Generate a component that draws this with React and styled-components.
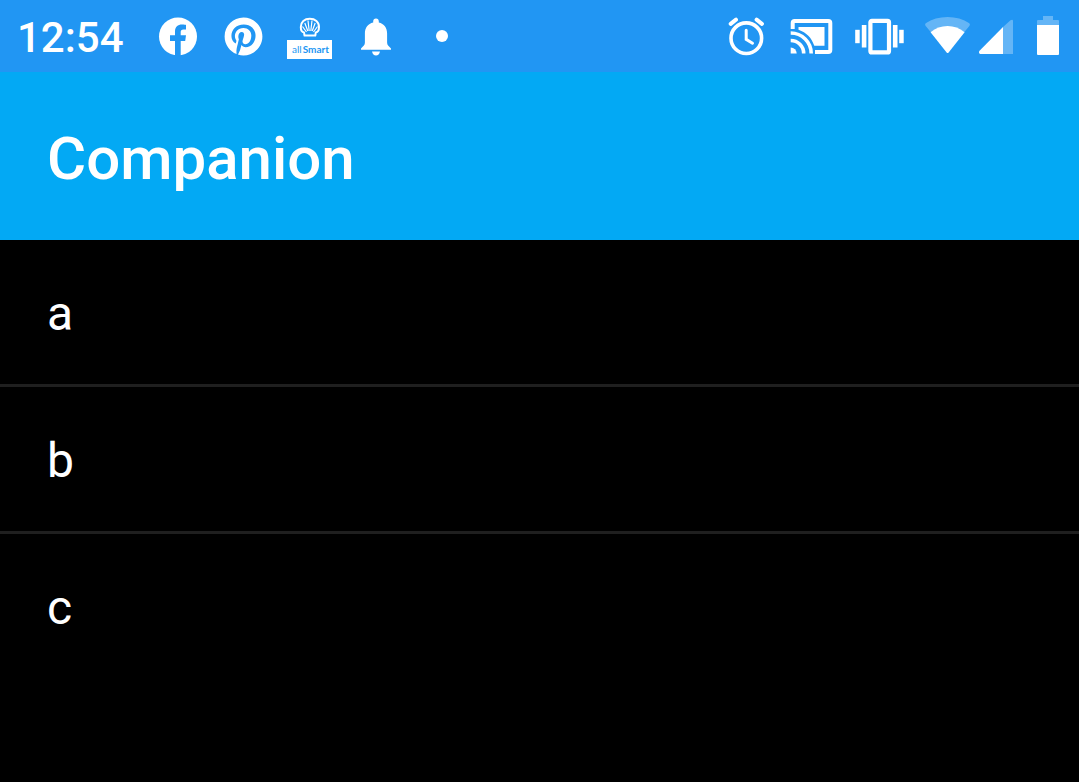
import React from "react";
import styled, { createGlobalStyle } from "styled-components";
import { FaPinterest } from "react-icons/fa";

const items = ["a", "b", "c"];

const FacebookIcon = () => (
  <svg width="39" height="39" viewBox="0 0 39 39" aria-hidden="true">
    <circle cx="20" cy="19.5" r="19" fill="#fff" />
    <path
      d="M17 39 V24 H12 V18.3 H17 V14.5 C17 10 19.8 7.6 24 7.6 C25.8 7.6 28 8 28 8 V12.6 H25.5 C23.4 12.6 22.7 13.8 22.7 15.2 V18.3 H28 L27.2 24 H22.7 V39 Z"
      fill={colors.status}
    />
  </svg>
);

const AllSmartLogo = () => (
  <svg width="45" height="42" viewBox="0 0 45 42" aria-label="allSmart">
    <path
      d="M17.5 18.5 L17 15.5 C14.8 15.2 13.8 12.5 13.8 10 C13.8 5 17.5 1.8 22.8 1.8 C28.1 1.8 32 5 32 10 C32 12.5 31 15.2 28.8 15.5 L28.3 18.5 Z"
      fill={colors.status}
      stroke="#fff"
      strokeWidth="2"
      strokeLinejoin="round"
    />
    <path
      d="M19.5 15 L15.5 9.5 M20.8 14 L17.8 6 M22.2 14 L21 3.5 M23.8 14 L25 3.5 M25.2 14 L28.2 6 M26.5 15 L30.5 9.5"
      stroke="#fff"
      strokeWidth="1.2"
    />
    <rect y="23" width="45" height="19" fill="#fff" />
    <LogoText x="5" y="36">
      all<tspan fontWeight="700" dx="1">Smart</tspan>
    </LogoText>
  </svg>
);

const BellIcon = () => (
  <svg width="45" height="45" viewBox="0 0 45 45" fill="#fff" aria-hidden="true">
    <path d="M23 4.5 C24.8 4.5 25.8 5.7 25.8 7.3 V8.6 C31 9.8 34.1 14 34.1 19.5 V28.5 C34.1 31 35.5 32 38 34.5 V35.8 H8 V34.5 C10.5 32 11.9 31 11.9 28.5 V19.5 C11.9 14 15 9.8 20.2 8.6 V7.3 C20.2 5.7 21.2 4.5 23 4.5 Z" />
    <path d="M19 37.6 H27 C26.5 40.3 25 41.5 23 41.5 C21 41.5 19.5 40.3 19 37.6 Z" />
  </svg>
);

const AlarmIcon = () => (
  <svg width="54" height="40" viewBox="0 0 54 40" fill="none" stroke="#fff" aria-hidden="true">
    <circle cx="26.3" cy="22.2" r="15.3" strokeWidth="3.6" />
    <path d="M10.7 7.8 L16 3.7 M41.9 7.8 L36.6 3.7" strokeWidth="4" strokeLinecap="round" />
    <path d="M26.2 14.3 V23.3 L32.5 27.2" strokeWidth="3" strokeLinecap="round" />
  </svg>
);

const CastIcon = () => (
  <svg width="58" height="40" viewBox="0 0 58 40" fill="none" stroke="#fff" aria-hidden="true">
    <path
      d="M10.7 13 V7 Q10.7 5 12.7 5 H46.3 Q48.3 5 48.3 7 V34 Q48.3 36 46.3 36 H33"
      strokeWidth="4"
    />
    <path d="M16.5 11 H42.5 V29.8 H32.3 C29.5 21.5 24.5 16.5 16.5 13.7 Z" fill="#fff" stroke="none" />
    <path d="M8.7 17 A20.5 20.5 0 0 1 29.2 37.5 M8.7 24.5 A13 13 0 0 1 21.7 37.5" strokeWidth="3.6" />
    <path d="M8.7 31.5 A6 6 0 0 1 14.7 37.5 H8.7 Z" fill="#fff" stroke="none" />
  </svg>
);

const VibrateIcon = () => (
  <svg width="62" height="40" viewBox="0 0 62 40" fill="#fff" aria-hidden="true">
    <rect x="22.4" y="4.8" width="18.6" height="31.6" rx="1.5" fill="none" stroke="#fff" strokeWidth="4.2" />
    <rect x="7.2" y="13.8" width="4.5" height="13.4" />
    <rect x="13.8" y="9" width="4.6" height="22.5" />
    <rect x="44.9" y="9" width="4.6" height="22.5" />
    <rect x="51.2" y="13.8" width="4.5" height="13.4" />
  </svg>
);

const WifiIcon = () => (
  <svg width="53" height="40" viewBox="0 0 53 40" fill="#fff" aria-hidden="true">
    <path
      d="M29.6 36.5 L51.5 9.7 Q52.5 8.5 51.3 7.3 Q42 1 29.6 1 Q17 1 7.7 7.3 Q6.5 8.5 7.5 9.7 Z"
      opacity="0.3"
    />
    <path d="M28.6 36.5 Q29.6 37.5 30.6 36.5 L46.6 16.3 Q39 10 29.6 10 Q20 10 12.6 16.3 Z" />
  </svg>
);

const SignalIcon = () => (
  <svg width="40" height="40" viewBox="0 0 40 40" fill="#fff" aria-hidden="true">
    <path d="M24 11 V38 H34 V5 Q34 2.8 31.5 4.3 Z" opacity="0.3" />
    <path d="M24 11 V38 H1 Q-0.5 37 0.3 35 Z" />
  </svg>
);

const BatteryIcon = () => (
  <svg width="32" height="40" viewBox="0 0 32 40" fill="#fff" aria-hidden="true">
    <path d="M16 0 H26 V4 H31 Q32 4 32 5 V9 H10 V5 Q10 4 11 4 H16 Z" opacity="0.3" />
    <path d="M10 9 H32 V38 Q32 39 31 39 H11 Q10 39 10 38 Z" />
  </svg>
);

const App = () => (
  <>
    <GlobalStyle />
    <StatusBar>
      <Clock>12:54</Clock>
      <Notifications>
        <Slot><FacebookIcon /></Slot>
        <Slot><FaPinterest size={39} /></Slot>
        <Slot $low><AllSmartLogo /></Slot>
        <Slot><BellIcon /></Slot>
        <Slot><Dot /></Slot>
      </Notifications>
      <System>
        <AlarmIcon />
        <CastIcon />
        <VibrateIcon />
        <WifiIcon />
        <SignalIcon />
        <BatteryIcon />
      </System>
    </StatusBar>
    <AppBar>
      <Title>Companion</Title>
    </AppBar>
    <List>
      {items.map((item) => (
        <Item key={item}>{item}</Item>
      ))}
    </List>
  </>
);

const colors = {
  status: "#2196f3",
  bar: "#03a9f4",
  divider: "#1f1f1f",
};

const GlobalStyle = createGlobalStyle`
  * {
    box-sizing: border-box;
  }

  body {
    margin: 0;
    background: #000;
    color: #fff;
    font-family: Roboto, sans-serif;
  }
`;

const StatusBar = styled.header`
  display: flex;
  align-items: center;
  height: 72px;
  padding: 0 20px 0 17px;
  background: ${colors.status};

  svg {
    display: block;
    flex: none;
  }
`;

const Clock = styled.time`
  width: 138px;
  padding-top: 4px;
  font-size: 42px;
  font-weight: 500;
  line-height: 48px;
`;

const Notifications = styled.div`
  display: flex;
  align-items: center;
  gap: 21px;
`;

const Slot = styled.span`
  display: flex;
  align-items: center;
  justify-content: center;
  width: 45px;
  padding-top: ${(props) => (props.$low ? "4px" : "0")};
`;

const Dot = styled.span`
  width: 12px;
  height: 12px;
  border-radius: 50%;
  background: #fff;
`;

const LogoText = styled.text`
  font-family: Lato, sans-serif;
  font-size: 10px;
  fill: ${colors.status};
`;

const System = styled.div`
  display: flex;
  align-items: center;
  gap: 8px;
  margin-left: auto;
`;

const AppBar = styled.div`
  display: flex;
  align-items: center;
  height: 168px;
  padding: 6px 47px 0;
  background: ${colors.bar};
`;

const Title = styled.h1`
  margin: 0;
  font-size: 60px;
  font-weight: 500;
  line-height: 72px;
`;

const List = styled.ul`
  margin: 0;
  padding: 0;
  list-style: none;
`;

const Item = styled.li`
  padding: 46px 47px 42px;
  font-size: 48px;
  line-height: 56px;

  & + & {
    border-top: 3px solid ${colors.divider};
  }
`;

export default App;
